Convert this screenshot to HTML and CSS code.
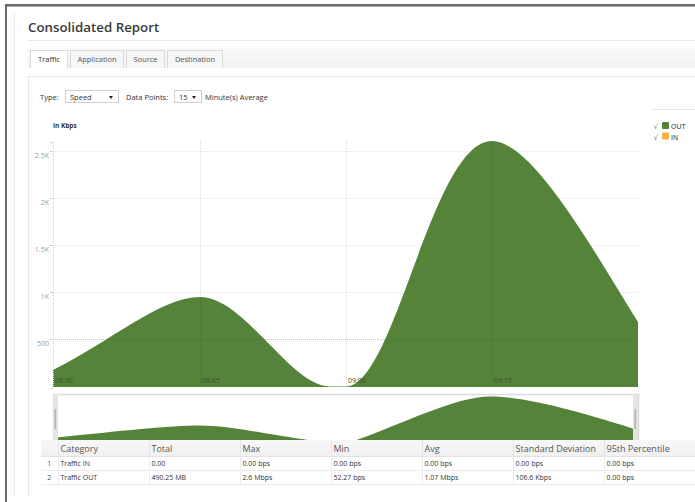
FILE: index.html
```html
<!DOCTYPE html>
<html lang="en">
<head>
<meta charset="utf-8">
<title>Consolidated Report</title>
<link rel="stylesheet" href="styles.css">
</head>
<body>
<div class="frame">
  <div class="sheet">
    <h1 class="title">Consolidated Report</h1>

    <div class="tabs">
      <div class="tab tab-active tab-traffic">Traffic</div>
      <div class="tab tab-app">Application</div>
      <div class="tab tab-src">Source</div>
      <div class="tab tab-dst">Destination</div>
    </div>

    <div class="panel">
      <div class="controls">
        <span class="lbl lbl-type">Type:</span>
        <div class="select select-type"><span>Speed</span><i class="caret"></i></div>
        <span class="lbl lbl-points">Data Points:</span>
        <div class="select select-points"><span>15</span><i class="caret"></i></div>
        <span class="lbl lbl-avg">Minute(s) Average</span>
      </div>

      <svg class="chart" width="666" height="336" viewBox="0 0 666 336">
        <defs>
          <clipPath id="plot-clip"><rect x="53" y="130" width="585" height="257"/></clipPath>
          <clipPath id="nav-clip"><rect x="54" y="395" width="584" height="45"/></clipPath>
        </defs>
        <g transform="translate(-29,-104)">
          <text class="unit" x="53" y="128">in Kbps</text>

          <!-- horizontal grid -->
          <g class="grid">
            <line x1="53" y1="151.5" x2="638" y2="151.5"/>
            <line x1="53" y1="198.5" x2="638" y2="198.5"/>
            <line x1="53" y1="245.5" x2="638" y2="245.5"/>
            <line x1="53" y1="292.5" x2="638" y2="292.5"/>
            <line x1="53" y1="339.5" x2="638" y2="339.5"/>
          </g>

          <!-- traffic out series -->
          <path class="area" clip-path="url(#plot-clip)"
                d="M53,370 C110,342 160,297 200,297 C245,297 290,386.5 330,386.5 L346,386.5 C395,386.5 432,141 492,141 C532,141 592,248 638,322 L638,387 L53,387 Z"/>

          <!-- vertical grid drawn over the series -->
          <g class="grid grid-top">
            <line x1="200.5" y1="141" x2="200.5" y2="387"/>
            <line x1="346.5" y1="141" x2="346.5" y2="387"/>
            <line x1="492.5" y1="141" x2="492.5" y2="387"/>
            <line x1="53" y1="339.5" x2="638" y2="339.5"/>
          </g>

          <!-- y axis -->
          <line class="axis" x1="53.5" y1="141" x2="53.5" y2="388"/>
          <g class="ticks">
            <line x1="50" y1="142.5" x2="53" y2="142.5"/>
            <line x1="50" y1="151.5" x2="53" y2="151.5"/>
            <line x1="50" y1="198.5" x2="53" y2="198.5"/>
            <line x1="50" y1="245.5" x2="53" y2="245.5"/>
            <line x1="50" y1="292.5" x2="53" y2="292.5"/>
            <line x1="50" y1="339.5" x2="53" y2="339.5"/>
            <line x1="51" y1="388.5" x2="53" y2="388.5"/>
          </g>
          <g class="ylabels">
            <text x="49" y="157.5">2.5K</text>
            <text x="49" y="204.5">2K</text>
            <text x="49" y="251.5">1.5K</text>
            <text x="49" y="298.5">1K</text>
            <text x="49" y="345.5">500</text>
          </g>

          <g class="xlabels">
            <text x="55" y="383">08:30</text>
            <text x="202" y="383">08:45</text>
            <text x="348" y="383">09:00</text>
            <text x="494" y="383">09:15</text>
          </g>

          <!-- legend -->
          <line class="legend-rule" x1="651" y1="109.5" x2="700" y2="109.5"/>
          <text class="check" x="653.5" y="129">√</text>
          <rect x="662" y="122" width="7" height="7" rx="1" class="sw-out"/>
          <text class="legend" x="671" y="129">OUT</text>
          <text class="check" x="653.5" y="139.5">√</text>
          <rect x="662" y="132.5" width="7" height="7" rx="1" class="sw-in"/>
          <text class="legend" x="671" y="139.5">IN</text>

          <!-- navigator -->
          <rect class="nav-frame" x="53.5" y="394.5" width="585" height="50"/>
          <path class="area" clip-path="url(#nav-clip)"
                d="M57,437.5 C120,431 170,425.5 200,425.5 C232,425.5 280,437 312,440.5 L355,440.5 C400,425 455,396.5 490,396.5 C528,396.5 590,415 634,429 L634,441 L57,441 Z"/>
          <rect class="handle" x="53" y="394" width="5" height="47"/>
          <rect class="grip" x="54.5" y="409" width="1.6" height="20"/>
          <rect class="handle" x="633" y="394" width="5" height="47"/>
          <rect class="grip" x="634.5" y="409" width="1.6" height="20"/>
        </g>
      </svg>

      <table class="stats">
        <colgroup>
          <col class="c-idx">
          <col class="c-col"><col class="c-col"><col class="c-col"><col class="c-col">
          <col class="c-col"><col class="c-col"><col class="c-col">
        </colgroup>
        <thead>
          <tr>
            <th></th><th>Category</th><th>Total</th><th>Max</th><th>Min</th><th>Avg</th><th>Standard Deviation</th><th>95th Percentile</th>
          </tr>
        </thead>
        <tbody>
          <tr>
            <td class="idx">1</td><td>Traffic IN</td><td>0.00</td><td>0.00 bps</td><td>0.00 bps</td><td>0.00 bps</td><td>0.00 bps</td><td>0.00 bps</td>
          </tr>
          <tr>
            <td class="idx">2</td><td>Traffic OUT</td><td>490.25 MB</td><td>2.6 Mbps</td><td>52.27 bps</td><td>1.07 Mbps</td><td>106.6 Kbps</td><td>0.00 bps</td>
          </tr>
        </tbody>
      </table>
    </div>
  </div>
</div>
</body>
</html>
```
FILE: styles.css
```css
html, body {
  margin: 0;
  padding: 0;
  background: #ffffff;
  overflow: hidden;
}

body {
  width: 695px;
  height: 502px;
  font-family: "Open Sans", "Liberation Sans", sans-serif;
  color: #333;
}

.frame {
  margin: 4px 0 0 5px;
  height: 500px;
  border-top: 2px solid #6c6c6c;
  border-left: 2px solid #6c6c6c;
  box-shadow: inset 0 1px 0 #a8a8a8;
}

.sheet {
  margin: 7px 0 0 7px;
  height: 483px;
  border-left: 1px solid #ececec;
  padding-left: 13px;
}

.title {
  margin: 0;
  padding: 4px 0 3px;
  font-size: 13.3px;
  line-height: 20px;
  font-weight: 600;
  color: #3a3a3a;
  border-bottom: 1px solid #e8e8e8;
}

/* tab strip */
.tabs {
  margin-top: 6px;
  height: 21px;
  box-sizing: border-box;
  padding: 3px 0 0 2px;
  display: flex;
  gap: 2px;
  background: linear-gradient(#fafafa, #f1f1f1);
}

.tab {
  box-sizing: border-box;
  height: 18px;
  border: 1px solid #d9d9d9;
  border-bottom: none;
  background: #f6f6f6;
  font-size: 7.5px;
  line-height: 17px;
  text-align: center;
  color: #555;
}

.tab-active {
  background: #ffffff;
  color: #333;
}

.tab-traffic { width: 38px; }
.tab-app { width: 54px; }
.tab-src { width: 39px; }
.tab-dst { width: 56px; }

/* content panel */
.panel {
  margin-top: 8px;
  height: 419px;
  border-top: 1px solid #e6e6e6;
  border-left: 1px solid #e6e6e6;
}

.controls {
  margin-top: 13px;
  height: 13px;
  padding-left: 11px;
  display: flex;
  align-items: center;
  font-size: 7.5px;
  color: #333;
}

.lbl { white-space: nowrap; }
.lbl-type { width: 25px; }
.lbl-points { margin-left: 7px; width: 48px; }
.lbl-avg { margin-left: 3px; }

.select {
  box-sizing: border-box;
  height: 13px;
  border: 1px solid #cfcfcf;
  background: #fff;
  display: flex;
  align-items: center;
  justify-content: space-between;
  padding: 0 5px 0 4px;
  font-size: 7.5px;
}

.select-type { width: 54px; }
.select-points { width: 28px; }

.caret {
  width: 0;
  height: 0;
  border-left: 2.5px solid transparent;
  border-right: 2.5px solid transparent;
  border-top: 3px solid #222;
  margin-top: 1px;
}

/* chart */
.chart {
  display: block;
  margin-top: 1px;
  font-family: "Open Sans", "Liberation Sans", sans-serif;
}

.chart .unit {
  font-size: 6.5px;
  font-weight: 700;
  fill: #333;
}

.chart .grid line {
  stroke: #e3e3e3;
  stroke-width: 1;
  stroke-dasharray: 1 1;
}

.chart .grid-top line {
  stroke: rgba(0, 0, 0, 0.13);
}

.chart .area {
  fill: #55833a;
}

.chart .axis {
  stroke: #d2d2d2;
  stroke-dasharray: 1 1;
}

.chart .ticks line {
  stroke: #cfcfcf;
}

.chart .ylabels text {
  font-size: 7px;
  fill: #9a9a9a;
  text-anchor: end;
}

.chart .xlabels text {
  font-size: 7px;
  fill: #3f5233;
}

.chart .legend-rule {
  stroke: #e6e6e6;
}

.chart .check {
  font-family: "DejaVu Sans", sans-serif;
  font-size: 7.5px;
  fill: #777;
}

.chart .legend {
  font-family: "Liberation Sans", Arial, sans-serif;
  font-size: 7px;
  fill: #333;
}

.chart .sw-out { fill: #55833a; }
.chart .sw-in { fill: #f4b43a; }

.chart .nav-frame {
  fill: #fff;
  stroke: #dcdcdc;
  stroke-width: 1.5;
}

.chart .handle { fill: #e4e4e4; }
.chart .grip { fill: #b4b4b4; }

/* stats table */
.stats {
  margin-left: 12px;
  width: 653px;
  table-layout: fixed;
  border-collapse: collapse;
  position: relative;
  background: #fff;
}

.stats .c-idx { width: 17px; }
.stats .c-col { width: 91px; }

.stats th {
  height: 16px;
  padding: 0 2px;
  font-size: 9px;
  font-weight: 400;
  color: #555;
  text-align: left;
  background: linear-gradient(#f7f7f7, #f0f0f0);
  border-left: 1px solid #e4e4e4;
  border-bottom: 1px solid #e2e2e2;
  white-space: nowrap;
  overflow: hidden;
}

.stats th:first-child { border-left: none; }

.stats td {
  height: 13px;
  padding: 0 2px;
  font-size: 7px;
  color: #333;
  border-left: 1px solid #ececec;
  border-bottom: 1px solid #ececec;
  white-space: nowrap;
}

.stats td.idx {
  border-left: none;
  text-align: center;
  color: #555;
}
```
